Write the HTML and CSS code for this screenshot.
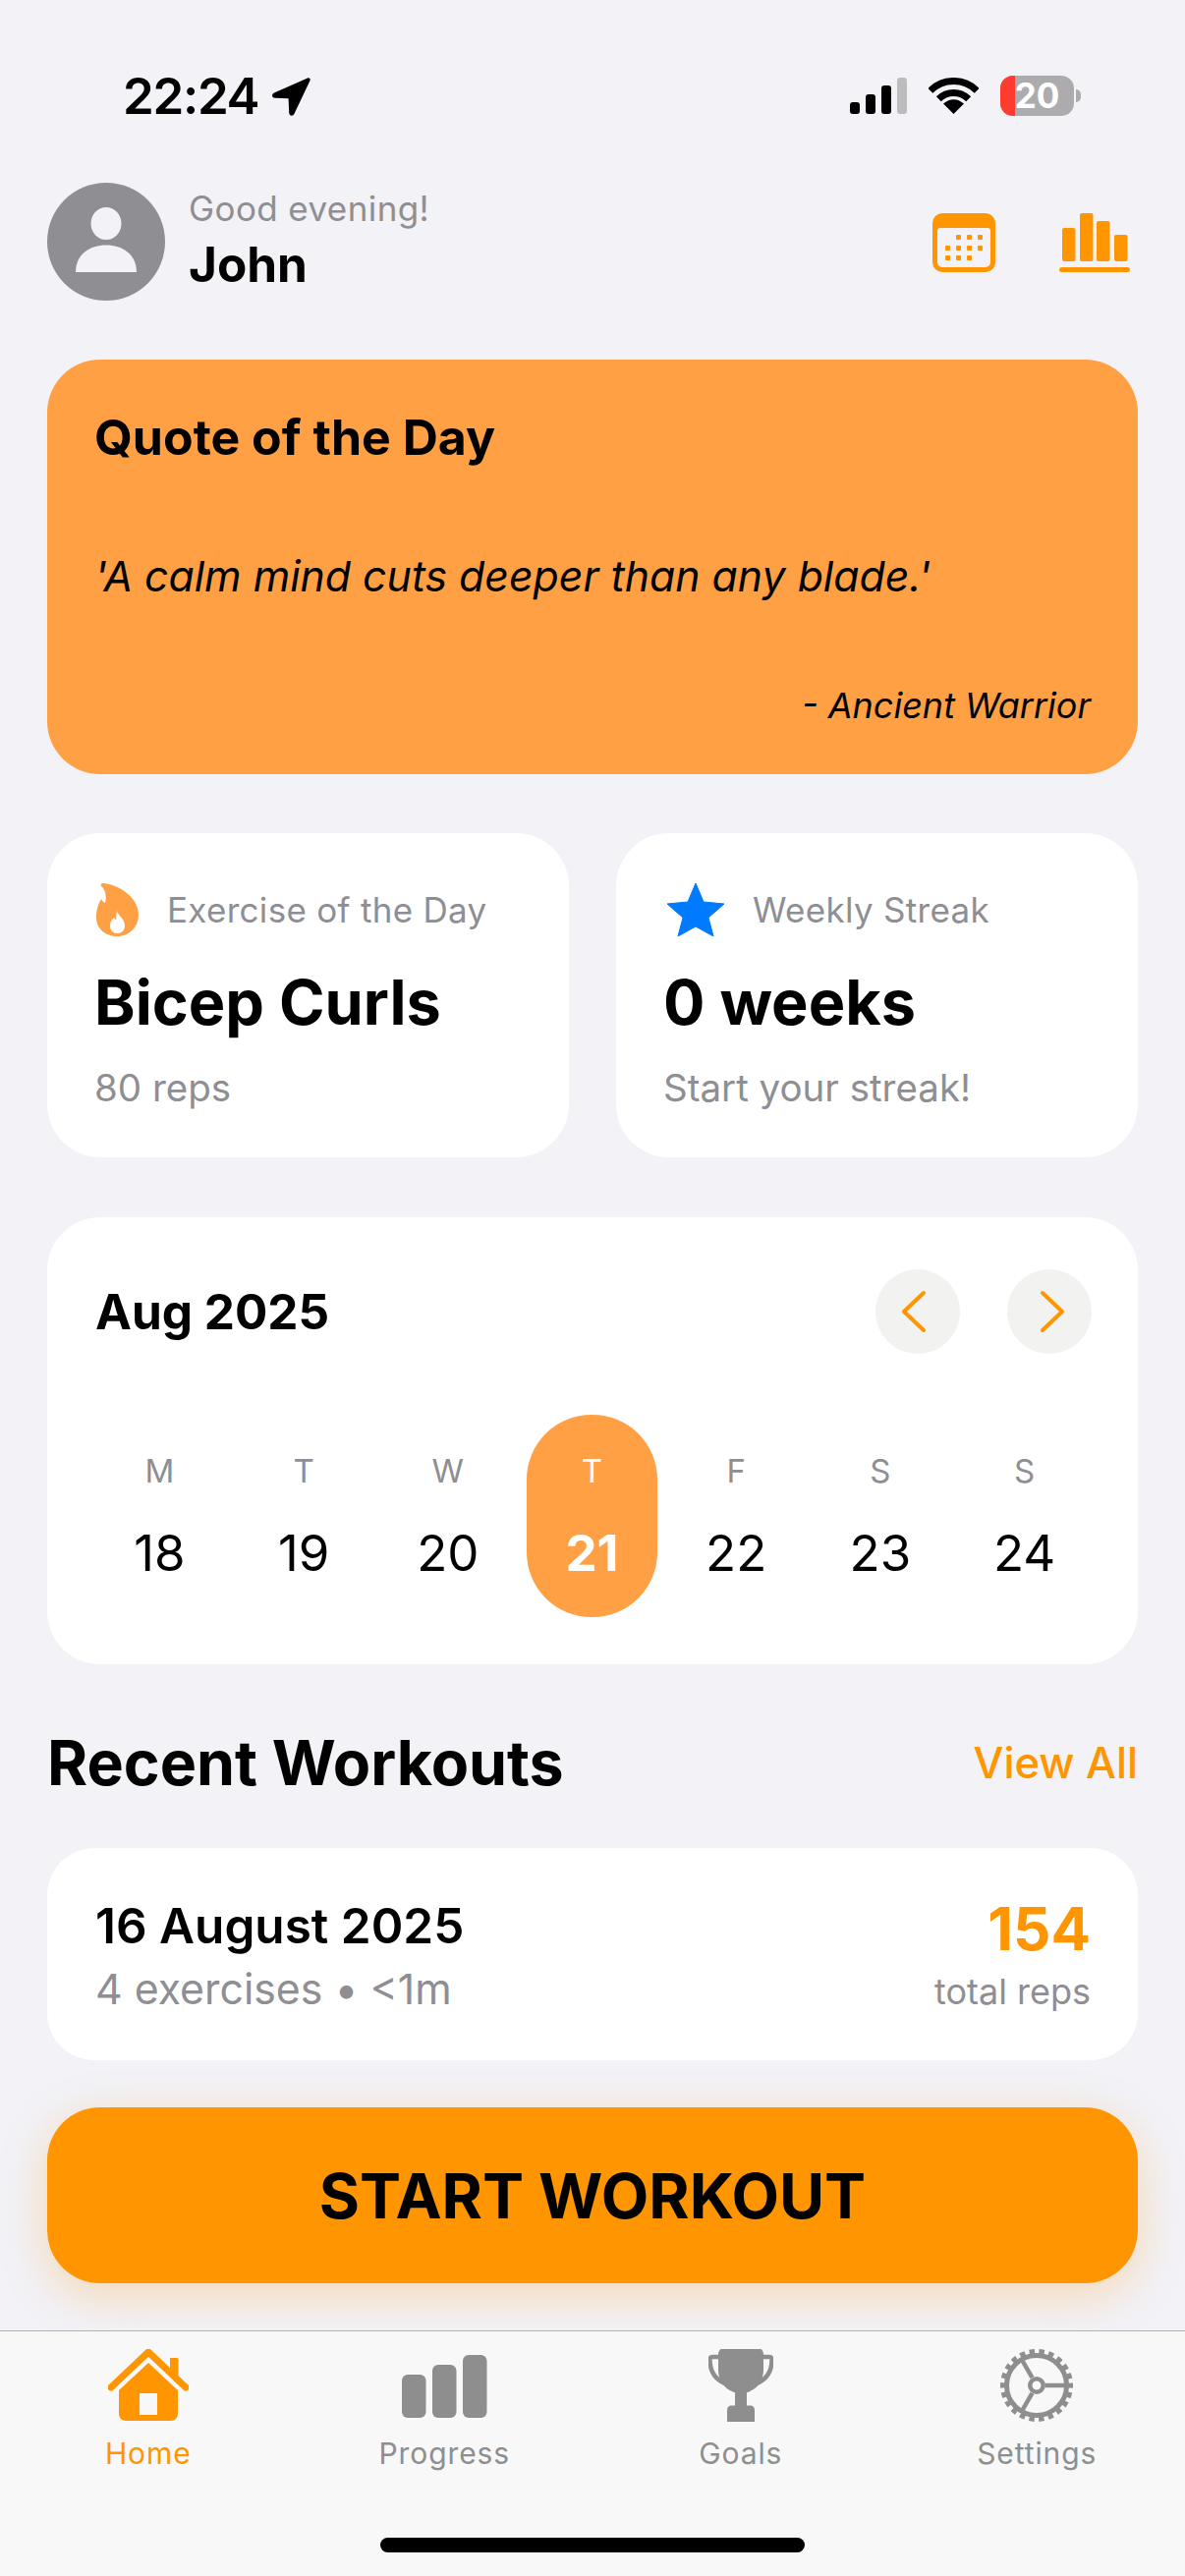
FILE: index.html
```html
<!DOCTYPE html>
<html>
<head>
  <meta charset="utf-8">
  <title>Home</title>
  <link rel="stylesheet" href="styles.css">
</head>
<body>
  <div class="screen">
    <!-- status bar -->
    <div class="status">
      <div class="status-left">
        <span class="time">22:24</span>
        <svg class="loc" width="40" height="39" viewBox="0 0 40 39"><path d="M37 .5 3 15.500c-3 1.400-2.400 5.200 1 5.300l13.600.5.6 14.400c.2 3.400 4 4 5.300 1L39.500 3c.7-1.700-.8-3.200-2.500-2.500z" fill="#000"/></svg>
      </div>
      <div class="status-right">
        <svg width="58" height="37" viewBox="0 0 58 37"><rect x="0" y="25" width="10" height="12" rx="3"/><rect x="16" y="17" width="10" height="20" rx="3"/><rect x="32" y="8" width="10" height="29" rx="3"/><rect x="48" y="0" width="10" height="37" rx="3" fill="#bcbcbf"/></svg>
        <svg width="51" height="37" viewBox="0 0 51 37"><path d="M1.800 13.300A33.500 33.500 0 0 1 49.200 13.300M10.300 21.800A21.500 21.500 0 0 1 40.700 21.800" fill="none" stroke="#000" stroke-width="7"/><path d="M25.500 37 15 26.500Q25.500 18 36 26.500Z"/></svg>
        <div class="battery">
          <div class="battery-body"><span class="battery-red"></span><span class="battery-num">20</span></div>
          <span class="battery-nub"></span>
        </div>
      </div>
    </div>

    <div class="content">
      <!-- header -->
      <div class="header">
        <div class="avatar">
          <svg width="62" height="66" viewBox="0 0 62 66"><ellipse cx="31" cy="16.500" rx="15.500" ry="16.500" fill="#f2f2f7"/><path d="M0 66C0 49 13 38.500 31 38.500S62 49 62 66z" fill="#f2f2f7"/></svg>
        </div>
        <div class="hello">
          <div class="hello-sub">Good evening!</div>
          <div class="hello-name">John</div>
        </div>
        <div class="header-icons">
          <svg width="64" height="60" viewBox="0 0 64 60"><path fill-rule="evenodd" d="M10 0h44a10 10 0 0 1 10 10v40a10 10 0 0 1-10 10H10A10 10 0 0 1 0 50V10A10 10 0 0 1 10 0zM8 15a3 3 0 0 0-3 3v32a5 5 0 0 0 5 5h44a5 5 0 0 0 5-5V18a3 3 0 0 0-3-3z" fill="#ff9500"/><g fill="#ff9500"><rect x="24" y="22" width="5" height="5" rx="1"/><rect x="35" y="22" width="5" height="5" rx="1"/><rect x="46" y="22" width="5" height="5" rx="1"/><rect x="13" y="33" width="5" height="5" rx="1"/><rect x="24" y="33" width="5" height="5" rx="1"/><rect x="35" y="33" width="5" height="5" rx="1"/><rect x="46" y="33" width="5" height="5" rx="1"/><rect x="13" y="43" width="5" height="5" rx="1"/><rect x="24" y="43" width="5" height="5" rx="1"/><rect x="35" y="43" width="5" height="5" rx="1"/></g></svg>
          <svg width="72" height="60" viewBox="0 0 72 60" fill="#ff9500"><rect x="3" y="15" width="13.500" height="34" rx="2"/><rect x="21" y="0" width="13.500" height="49" rx="2"/><rect x="38" y="8" width="13.500" height="41" rx="2"/><rect x="56" y="22" width="13.500" height="27" rx="2"/><rect x="0" y="55" width="72" height="5" rx="2.500"/></svg>
        </div>
      </div>

      <!-- quote -->
      <div class="quote">
        <h2 class="quote-title">Quote of the Day</h2>
        <p class="quote-text">'A calm mind cuts deeper than any blade.'</p>
        <p class="quote-author">- Ancient Warrior</p>
      </div>

      <!-- stats -->
      <div class="stats">
        <div class="stat">
          <div class="stat-top">
            <svg class="stat-icon" width="43" height="54" viewBox="0 0 43 54"><path fill-rule="evenodd" d="M7 0C22 1 43 14 43 32 43 45 33 54 21.500 54 9 54 0 46 0 35 0 27 2 21 5 16 6 18 7 19 9 20 11 14 9 6 5 3 4 1.500 5 0 7 0zM21 28C22 33 29 36 29 43 29 48 26 51 21.500 51 17 51 14 48 14 43 14 39 16 37 18 35 19 36 19 37 20 37 21 34 20 31 21 28z" fill="#ffa044"/></svg>
            <span class="stat-label">Exercise of the Day</span>
          </div>
          <div class="stat-value">Bicep Curls</div>
          <div class="stat-sub">80 reps</div>
        </div>
        <div class="stat">
          <div class="stat-top">
            <svg class="stat-icon star" width="58" height="54" viewBox="0 0 58 54"><path d="M29 0l8 19 21 2-16 14 5 19-18-10-18 10 5-19L0 21l21-2z" fill="#007aff" stroke="#007aff" stroke-width="1" stroke-linejoin="round"/></svg>
            <span class="stat-label">Weekly Streak</span>
          </div>
          <div class="stat-value">0 weeks</div>
          <div class="stat-sub">Start your streak!</div>
        </div>
      </div>

      <!-- calendar -->
      <div class="cal">
        <div class="cal-head">
          <span class="cal-month">Aug 2025</span>
          <div class="cal-nav">
            <span class="cal-btn"><svg class="prev" width="26" height="44" viewBox="0 0 26 44"><path d="M23 3 3 22l20 19" fill="none" stroke="#ff9500" stroke-width="4" stroke-linecap="round" stroke-linejoin="round"/></svg></span>
            <span class="cal-btn"><svg class="next" width="26" height="44" viewBox="0 0 26 44"><path d="M3 3l20 19L3 41" fill="none" stroke="#ff9500" stroke-width="4" stroke-linecap="round" stroke-linejoin="round"/></svg></span>
          </div>
        </div>
        <div class="days">
          <div class="day"><span class="day-name">M</span><span class="day-num">18</span></div>
          <div class="day"><span class="day-name">T</span><span class="day-num">19</span></div>
          <div class="day"><span class="day-name">W</span><span class="day-num">20</span></div>
          <div class="day today"><span class="day-name">T</span><span class="day-num">21</span></div>
          <div class="day"><span class="day-name">F</span><span class="day-num">22</span></div>
          <div class="day"><span class="day-name">S</span><span class="day-num">23</span></div>
          <div class="day"><span class="day-name">S</span><span class="day-num">24</span></div>
        </div>
      </div>

      <!-- recent -->
      <div class="section-head">
        <h2 class="section-title">Recent Workouts</h2>
        <span class="view-all">View All</span>
      </div>
      <div class="workout">
        <div class="workout-left">
          <div class="workout-date">16 August 2025</div>
          <div class="workout-info">4 exercises • &lt;1m</div>
        </div>
        <div class="workout-right">
          <div class="workout-reps">154</div>
          <div class="workout-label">total reps</div>
        </div>
      </div>

      <div class="start">START WORKOUT</div>
    </div>

    <!-- tab bar -->
    <div class="tabbar">
      <div class="tabs">
        <div class="tab active">
          <svg width="82" height="74" viewBox="0 0 82 74"><path d="M3 39 41 3l38 36" fill="none" stroke="#ff9500" stroke-width="7" stroke-linecap="round" stroke-linejoin="round"/><path d="M63 9h7a1.500 1.500 0 0 1 1.500 1.500V28L63 20z" fill="#ff9500"/><path fill-rule="evenodd" d="M41 14 71 42v24a7 7 0 0 1-7 7H18a7 7 0 0 1-7-7V42zM32 45v22h18V45z" fill="#ff9500"/></svg>
          <span class="tab-label">Home</span>
        </div>
        <div class="tab">
          <svg width="87" height="74" viewBox="0 0 87 74" fill="#8e8e8e"><rect x="0" y="26" width="24.500" height="44" rx="6"/><rect x="31" y="16" width="24.500" height="54" rx="6"/><rect x="62" y="6" width="24.500" height="64" rx="6"/></svg>
          <span class="tab-label">Progress</span>
        </div>
        <div class="tab">
          <svg width="66" height="74" viewBox="0 0 66 74" fill="#8e8e8e"><path d="M13 0h40c1 0 3 2 3 5v16c0 10-5 19-16 23h-1v15h-12V44h-1C15 40 10 31 10 21V5c0-3 2-5 3-5z"/><path d="M13 8H4c-2 0-2.500 1-2.500 3 0 12 6 21 18 25M53 8h9c2 0 2.500 1 2.500 3 0 12-6 21-18 25" fill="none" stroke="#8e8e8e" stroke-width="4.500"/><path d="M19 62c0-3 2-4.500 4-4.500h20c2 0 4 1.500 4 4.500v12H19z"/></svg>
          <span class="tab-label">Goals</span>
        </div>
        <div class="tab">
          <svg width="74" height="74" viewBox="0 0 74 74" fill="none" stroke="#8e8e8e"><circle cx="37" cy="37" r="34.500" stroke-width="5" stroke-dasharray="5.400 4.450" stroke-dashoffset="2.700"/><circle cx="37" cy="37" r="30.500" stroke-width="5"/><circle cx="37" cy="37" r="6.750" stroke-width="4.500"/><path d="M46 37H67M32.500 29.200 22 11M32.500 44.800 22 63" stroke-width="4.500"/></svg>
          <span class="tab-label">Settings</span>
        </div>
      </div>
      <div class="home-bar"></div>
    </div>
  </div>
</body>
</html>
```

FILE: styles.css
```css
* {
  box-sizing: border-box;
}
html, body {
  margin: 0;
  padding: 0;
}
body {
  width: 1206px;
  height: 2622px;
  overflow: hidden;
  background: #f2f2f7;
  font-family: Inter, "Liberation Sans", sans-serif;
  color: #000;
}
h2, p {
  margin: 0;
}
.screen {
  height: 2622px;
  display: flex;
  flex-direction: column;
}

/* status bar */
.status {
  height: 150px;
  display: flex;
  justify-content: space-between;
  padding: 77px 106px 0 125px;
}
.status-left {
  display: flex;
  align-items: flex-start;
  gap: 13px;
}
.time {
  font-size: 51px;
  font-weight: 600;
  letter-spacing: -1.300px;
  line-height: 42px;
}
.loc {
  margin-top: 2px;
}
.status-right {
  display: flex;
  align-items: flex-start;
  gap: 22px;
}
.status-right svg {
  margin-top: 2px;
}
.battery {
  display: flex;
  align-items: center;
  gap: 2px;
}
.battery-body {
  position: relative;
  width: 75px;
  height: 41px;
  background: #acacae;
  border-radius: 13px;
  text-align: center;
}
.battery-red {
  position: absolute;
  left: 0;
  top: 0;
  bottom: 0;
  width: 15px;
  background: #ff3b30;
  border-radius: 13px 0 0 13px;
}
.battery-num {
  position: relative;
  color: #fff;
  font-size: 35px;
  font-weight: 700;
  line-height: 41px;
}
.battery-nub {
  width: 5px;
  height: 13px;
  background: #acacae;
  border-radius: 0 5px 5px 0;
}

.content {
  padding: 36px 48px 0;
}

/* header */
.header {
  height: 120px;
  display: flex;
  align-items: center;
}
.avatar {
  width: 120px;
  height: 120px;
  border-radius: 50%;
  background: #8e8e93;
  display: flex;
  align-items: center;
  justify-content: center;
  padding-bottom: 4px;
}
.hello {
  margin-left: 24px;
  flex: 1;
}
.hello-sub {
  font-size: 35px;
  color: #8e8e93;
  line-height: 46px;
  letter-spacing: 0.4px;
  margin-top: -3px;
}
.hello-name {
  margin-top: 3px;
  font-size: 49.500px;
  font-weight: 700;
  line-height: 62px;
}
.header-icons {
  display: flex;
  gap: 65px;
  margin-right: 8px;
  margin-top: 1px;
}

/* quote */
.quote {
  margin-top: 60px;
  height: 422px;
  background: #ffa044;
  border-radius: 54px;
  padding: 50px 48px 0;
}
.quote-title {
  font-size: 50px;
  font-weight: 700;
  line-height: 58px;
}
.quote-text {
  margin-top: 84px;
  font-size: 42.800px;
  font-style: italic;
  line-height: 58px;
}
.quote-author {
  margin-top: 80px;
  font-size: 36px;
  font-style: italic;
  text-align: right;
  line-height: 44px;
}

/* stats */
.stats {
  margin-top: 60px;
  display: grid;
  grid-template-columns: 1fr 1fr;
  gap: 48px;
}
.stat {
  height: 330px;
  background: #fff;
  border-radius: 54px;
  padding: 51px 48px 0 50px;
}
.stat-top {
  display: flex;
  align-items: center;
  gap: 29px;
  height: 54px;
}
.star {
  margin-left: 2px;
}
.stat-label {
  font-size: 35px;
  color: #8e8e93;
  letter-spacing: 0.3px;
}
.stat-value {
  margin-top: 29px;
  margin-left: -2px;
  font-size: 63px;
  font-weight: 700;
  line-height: 76px;
}
.stat-sub {
  margin-top: 27px;
  margin-left: -2px;
  font-size: 38.500px;
  color: #8e8e93;
  line-height: 44px;
}

/* calendar */
.cal {
  margin-top: 61px;
  height: 455px;
  background: #fff;
  border-radius: 54px;
  padding: 53px 47px 0 49px;
}
.cal-head {
  display: flex;
  justify-content: space-between;
  align-items: center;
  height: 86px;
}
.cal-month {
  font-size: 49.500px;
  font-weight: 700;
}
.cal-nav {
  display: flex;
  gap: 48px;
}
.cal-btn {
  width: 86px;
  height: 86px;
  border-radius: 50%;
  background: #f2f2f0;
  display: flex;
  align-items: center;
  justify-content: center;
}
.prev {
  margin-right: 9px;
}
.next {
  margin-left: 5px;
}
.days {
  margin: 62px -47px 0 -50px;
  display: grid;
  grid-template-columns: repeat(7, 146.7px);
  justify-content: center;
}
.day {
  width: 133px;
  height: 206px;
  justify-self: center;
  border-radius: 66px;
  display: flex;
  flex-direction: column;
  align-items: center;
  padding-top: 36px;
}
.day-name {
  font-size: 33px;
  color: #8e8e93;
  line-height: 42px;
}
.day-num {
  margin-top: 32px;
  font-size: 51px;
  line-height: 62px;
}
.today {
  background: #ffa044;
}
.today .day-name {
  color: #fff;
}
.today .day-num {
  color: #fff;
  font-weight: 700;
}

/* recent workouts */
.section-head {
  margin-top: 65px;
  height: 70px;
  display: flex;
  justify-content: space-between;
  align-items: center;
}
.section-title {
  font-size: 62.700px;
  font-weight: 700;
}
.view-all {
  font-size: 43.600px;
  font-weight: 500;
  color: #ff9500;
}
.workout {
  margin-top: 52px;
  height: 216px;
  background: #fff;
  border-radius: 48px;
  padding: 0 48px 0 49px;
  display: flex;
  justify-content: space-between;
  align-items: center;
}
.workout-left {
  padding-top: 3px;
}
.workout-date {
  font-size: 49.500px;
  font-weight: 600;
  line-height: 60px;
}
.workout-info {
  margin-top: 8px;
  font-size: 42.800px;
  color: #8e8e93;
  line-height: 54px;
}
.workout-right {
  text-align: right;
}
.workout-reps {
  font-size: 60px;
  font-weight: 700;
  color: #ff9500;
  line-height: 68px;
}
.workout-label {
  margin-top: 8px;
  font-size: 36px;
  color: #8e8e93;
  line-height: 44px;
}

/* start button */
.start {
  margin-top: 48px;
  height: 179px;
  background: #ff9500;
  border-radius: 54px;
  box-shadow: 0 12px 48px rgba(255, 149, 0, 0.28);
  display: flex;
  align-items: center;
  justify-content: center;
  font-size: 63px;
  font-weight: 700;
}

/* tab bar */
.tabbar {
  margin-top: 48px;
  flex: 1;
  background: #f8f8f8;
  border-top: 1px solid #b2b2b2;
  display: flex;
  flex-direction: column;
  align-items: center;
}
.tabs {
  width: 100%;
  height: 210px;
  display: grid;
  grid-template-columns: repeat(4, 1fr);
  padding-top: 18px;
}
.tab {
  display: flex;
  flex-direction: column;
  align-items: center;
}
.tab-label {
  margin-top: 12px;
  font-size: 30px;
  color: #8e8e8e;
  letter-spacing: 0.9px;
  line-height: 40px;
}
.active .tab-label {
  color: #ff9500;
}
.home-bar {
  width: 432px;
  height: 15px;
  background: #000;
  border-radius: 8px;
}
```
